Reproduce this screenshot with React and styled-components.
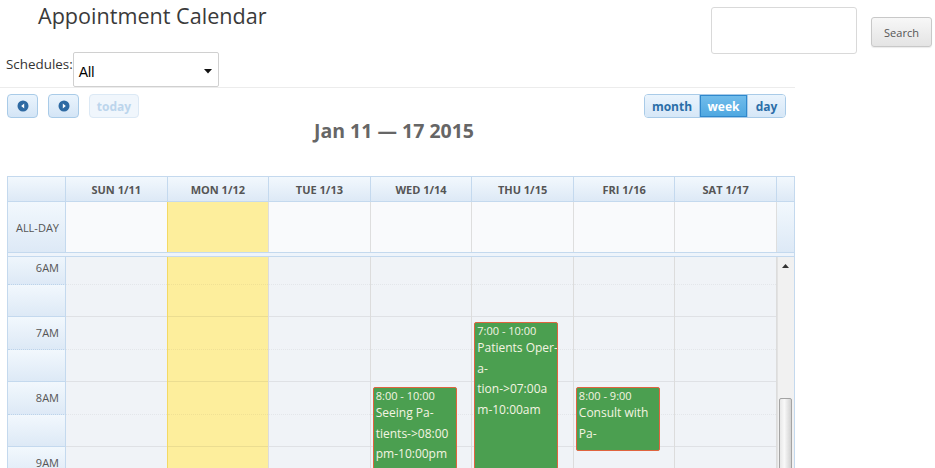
import React from 'react';
import styled, { createGlobalStyle, css } from 'styled-components';

const GlobalStyle = createGlobalStyle`
  body {
    margin: 0;
    background: #fff;
    font-family: "Open Sans", "DejaVu Sans", sans-serif;
  }
`

const cols = '58px repeat(7, 1fr) 17px'
const HOUR = 65

const Page = styled.div`
  width: 935px;
  height: 468px;
  overflow: hidden;
`

const Header = styled.div`
  display: flex;
  justify-content: space-between;
  align-items: flex-start;
  height: 52px;
`

const Title = styled.h1`
  margin: 0 0 0 38px;
  padding-top: 1px;
  font-size: 21.6px;
  line-height: 30px;
  font-weight: 400;
  color: #3a3a3a;
`

const SearchForm = styled.div`
  display: flex;
  align-items: flex-start;
  gap: 14px;
  padding: 7px 3px 0 0;
`

const SearchInput = styled.div`
  width: 146px;
  height: 47px;
  box-sizing: border-box;
  border: 1px solid #d9d9d9;
  border-radius: 3px;
  background: #fff;
`

const SearchButton = styled.div`
  margin-top: 10px;
  width: 61px;
  height: 30px;
  box-sizing: border-box;
  border: 1px solid #c8c8c8;
  border-radius: 3px;
  background: linear-gradient(#f7f7f7, #e4e4e4);
  box-shadow: 0 1px 1px rgba(0, 0, 0, 0.08);
  display: flex;
  align-items: center;
  justify-content: center;
  font-size: 11px;
  color: #555;
`

const Main = styled.div`
  width: 795px;
`

const ScheduleRow = styled.div`
  display: flex;
  align-items: flex-start;
  height: 35px;
  padding-left: 6px;
  border-bottom: 1px solid #ececec;
`

const Label = styled.span`
  padding-top: 3px;
  font-size: 13.4px;
  line-height: 19px;
  color: #333;
`

const SelectBox = styled.div`
  width: 146px;
  height: 35px;
  box-sizing: border-box;
  border: 1px solid #d0d0d0;
  border-radius: 2px;
  background: #fff;
  display: flex;
  align-items: center;
  justify-content: space-between;
  padding: 4px 6px 0 5px;
  font-family: "Liberation Sans", Arial, sans-serif;
  font-size: 14px;
  color: #000;
`

const Toolbar = styled.div`
  display: flex;
  justify-content: space-between;
  height: 24px;
  margin-top: 6px;
  padding: 0 9px 0 7px;
`

const NavGroup = styled.div`
  display: flex;
  gap: 10px;
`

const NavButton = styled.div`
  width: ${p => p.$width}px;
  height: 24px;
  box-sizing: border-box;
  border: 1px solid ${p => (p.$disabled ? '#dce9f5' : '#a9cbe8')};
  border-radius: 4px;
  background: ${p => (p.$disabled ? '#f0f6fc' : 'linear-gradient(#eaf4fd, #d4e5f6)')};
  display: flex;
  align-items: center;
  justify-content: center;
  font-size: 12px;
  font-weight: 700;
  color: ${p => (p.$disabled ? '#bcd5ec' : '#2b6ea8')};
`

const ViewGroup = styled.div`
  display: flex;
  border: 1px solid #a9cbe8;
  border-radius: 4px;
  overflow: hidden;
  height: 24px;
  box-sizing: border-box;
`

const ViewButton = styled.div`
  width: ${p => p.$width}px;
  display: flex;
  align-items: center;
  justify-content: center;
  font-size: 12px;
  font-weight: 700;
  color: #2b6ea8;
  background: linear-gradient(#eaf4fd, #d6e7f7);
  & + & {
    border-left: 1px solid #a9cbe8;
  }
  ${p => p.$active && css`
    background: linear-gradient(#72bdeb, #4ea7e0);
    color: #fff;
    box-shadow: inset 0 0 0 1px #2f88cc;
  `}
`

const DateTitle = styled.h2`
  margin: 1px 0 0;
  padding-right: 7px;
  text-align: center;
  font-size: 19.5px;
  line-height: 24px;
  font-weight: 700;
  color: #666;
`

const Calendar = styled.div`
  margin: 33px 0 0 7px;
  width: 788px;
  box-sizing: border-box;
  border: 1px solid #c4d9ee;
  border-bottom: none;
`

const HeadRow = styled.div`
  display: grid;
  grid-template-columns: ${cols};
  height: 24px;
  border-bottom: 1px solid #c4d9ee;
`

const blueCell = css`
  background: linear-gradient(#f2f8fd, #dde9f6);
  border-right: 1px solid #c4d9ee;
  color: #555;
  font-size: 11px;
`

const HeadCell = styled.div`
  ${blueCell}
  display: flex;
  align-items: center;
  justify-content: center;
  font-weight: 700;
  &:last-child {
    border-right: none;
  }
`

const AllDayRow = styled.div`
  display: grid;
  grid-template-columns: ${cols};
  height: 50px;
`

const AxisLabel = styled.div`
  ${blueCell}
  display: flex;
  align-items: center;
  justify-content: flex-end;
  padding-right: 6px;
  &:last-child {
    border-right: none;
    padding: 0;
  }
`

const DayCell = styled.div`
  background: ${p => (p.$today ? '#fdee9c' : '#f9fafc')};
  border-right: 1px solid #dedede;
  ${p => p.$today && css`
    border-left: 1px solid #f4d964;
    margin-left: -1px;
  `}
`

const Divider = styled.div`
  height: 3px;
  border-top: 1px solid #c4d9ee;
  border-bottom: 1px solid #c4d9ee;
  background: #eef4fb;
`

const Body = styled.div`
  display: grid;
  grid-template-columns: ${cols};
  height: 220px;
  overflow: hidden;
`

const SlotStack = styled.div`
  margin-top: -6px;
`

const AxisSlot = styled.div`
  ${blueCell}
  height: ${HOUR / 2}px;
  box-sizing: border-box;
  border-top: 1px ${p => (p.$half ? 'dotted #bcd3ea' : 'solid #c4d9ee')};
  display: flex;
  align-items: center;
  justify-content: flex-end;
  padding-right: 6px;
`

const DayColumn = styled.div`
  position: relative;
  background: ${p => (p.$today ? '#fdee9c' : '#f0f3f7')};
  border-right: 1px solid #dcdcdc;
  ${p => p.$today && css`
    border-left: 1px solid #f4d964;
    margin-left: -1px;
  `}
`

const Slot = styled.div`
  height: ${HOUR / 2}px;
  box-sizing: border-box;
  border-top: 1px ${p => (p.$half ? 'dotted rgba(0, 0, 0, 0.05)' : 'solid rgba(0, 0, 0, 0.07)')};
`

const Event = styled.div`
  position: absolute;
  left: 2px;
  width: 84px;
  top: ${p => p.$top}px;
  height: ${p => p.$height}px;
  box-sizing: border-box;
  overflow: hidden;
  background: #4b9f50;
  border: 1px solid #e0643f;
  border-radius: 2px;
  padding: 1px 1px 0 2px;
  color: #f4f4e2;
  white-space: nowrap;
`

const EventTime = styled.div`
  font-size: 11px;
  line-height: 14px;
`

const EventLine = styled.div`
  font-size: 12px;
  line-height: 20.5px;
`

const Gutter = styled.div`
  background: #f1f1f1;
  border-left: 1px solid #e2e2e2;
  display: flex;
  flex-direction: column;
  align-items: center;
`

const Arrow = styled.div`
  margin-top: 7px;
  height: 6px;
  display: flex;
`

const Thumb = styled.div`
  margin-top: 128px;
  width: 13px;
  flex: 1;
  box-sizing: border-box;
  border: 1px solid #a3a3a3;
  border-radius: 2px;
  background: linear-gradient(90deg, #e8e8e8, #f8f8f8 40%, #d2d2d2);
  display: flex;
  flex-direction: column;
  align-items: center;
  justify-content: flex-end;
  gap: 2px;
  padding-bottom: 4px;
`

const Grip = styled.div`
  width: 7px;
  height: 1px;
  background: #888;
`

const NavIcon = ({ dir }) => (
  <svg width="12" height="12" viewBox="0 0 12 12">
    <circle cx="6" cy="6" r="5.5" fill="#2e6aa3" />
    {dir === 'left'
      ? <path d="M7.2 3.4 L4.2 6 L7.2 8.6 Z" fill="#fff" />
      : <path d="M4.8 3.4 L7.8 6 L4.8 8.6 Z" fill="#fff" />}
  </svg>
)

const Caret = () => (
  <svg width="8" height="5" viewBox="0 0 8 5">
    <path d="M0 0 H8 L4 4.5 Z" fill="#111" />
  </svg>
)

const days = ['SUN 1/11', 'MON 1/12', 'TUE 1/13', 'WED 1/14', 'THU 1/15', 'FRI 1/16', 'SAT 1/17']
const slots = ['6AM', '', '7AM', '', '8AM', '', '9AM', '']

const events = {
  3: [{ start: 8, end: 10, time: '8:00 - 10:00', lines: ['Seeing Pa-', 'tients->08:00', 'pm-10:00pm'] }],
  4: [{ start: 7, end: 10, time: '7:00 - 10:00', lines: ['Patients Oper-', 'a-', 'tion->07:00a', 'm-10:00am'] }],
  5: [{ start: 8, end: 9, time: '8:00 - 9:00', lines: ['Consult with', 'Pa-'] }],
}

const App = () => {
  return (
    <Page>
      <GlobalStyle />
      <Header>
        <Title>Appointment Calendar</Title>
        <SearchForm>
          <SearchInput />
          <SearchButton>Search</SearchButton>
        </SearchForm>
      </Header>

      <Main>
        <ScheduleRow>
          <Label>Schedules:</Label>
          <SelectBox>
            <span>All</span>
            <Caret />
          </SelectBox>
        </ScheduleRow>

        <Toolbar>
          <NavGroup>
            <NavButton $width={31}><NavIcon dir="left" /></NavButton>
            <NavButton $width={31}><NavIcon dir="right" /></NavButton>
            <NavButton $width={50} $disabled>today</NavButton>
          </NavGroup>
          <ViewGroup>
            <ViewButton $width={54}>month</ViewButton>
            <ViewButton $width={47} $active>week</ViewButton>
            <ViewButton $width={37}>day</ViewButton>
          </ViewGroup>
        </Toolbar>

        <DateTitle>Jan 11 — 17 2015</DateTitle>

        <Calendar>
          <HeadRow>
            <HeadCell />
            {days.map(d => <HeadCell key={d}>{d}</HeadCell>)}
            <HeadCell />
          </HeadRow>
          <AllDayRow>
            <AxisLabel>ALL-DAY</AxisLabel>
            {days.map((d, i) => <DayCell key={d} $today={i === 1} />)}
            <AxisLabel />
          </AllDayRow>
          <Divider />
          <Body>
            <SlotStack>
              {slots.map((s, i) => <AxisSlot key={i} $half={i % 2 === 1}>{s}</AxisSlot>)}
            </SlotStack>
            {days.map((d, i) => (
              <DayColumn key={d} $today={i === 1}>
                <SlotStack>
                  {slots.map((s, j) => <Slot key={j} $half={j % 2 === 1} />)}
                </SlotStack>
                {(events[i] || []).map(ev => (
                  <Event key={ev.time} $top={(ev.start - 6) * HOUR} $height={(ev.end - ev.start) * HOUR - 1}>
                    <EventTime>{ev.time}</EventTime>
                    {ev.lines.map(l => <EventLine key={l}>{l}</EventLine>)}
                  </Event>
                ))}
              </DayColumn>
            ))}
            <Gutter>
              <Arrow>
                <svg width="7" height="4" viewBox="0 0 7 4"><path d="M0 4 L3.5 0 L7 4 Z" fill="#333" /></svg>
              </Arrow>
              <Thumb>
                <Grip /><Grip /><Grip />
              </Thumb>
            </Gutter>
          </Body>
        </Calendar>
      </Main>
    </Page>
  )
}

export default App
